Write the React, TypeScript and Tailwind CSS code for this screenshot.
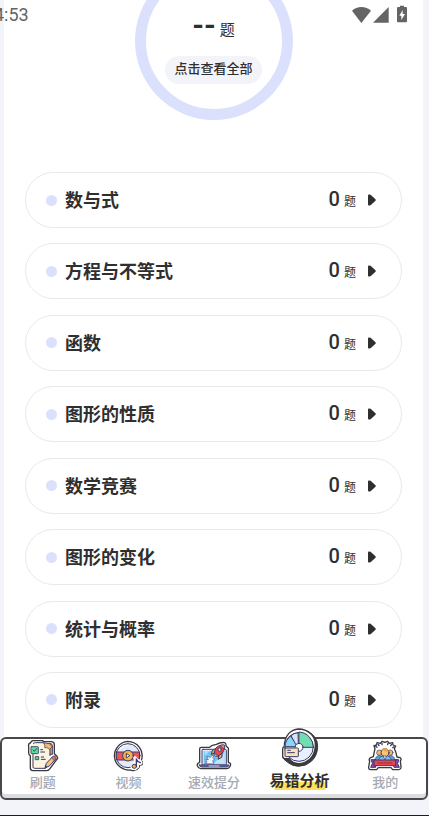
import type { ReactNode } from 'react'

interface Categoria {
  id: string
  nombre: string
  total: number
}

interface Tab {
  id: string
  label: string
  icon: ReactNode
}

const CATEGORIAS: Categoria[] = [
  { id: 'numeros', nombre: '数与式', total: 0 },
  { id: 'ecuaciones', nombre: '方程与不等式', total: 0 },
  { id: 'funciones', nombre: '函数', total: 0 },
  { id: 'figuras', nombre: '图形的性质', total: 0 },
  { id: 'concurso', nombre: '数学竞赛', total: 0 },
  { id: 'transformaciones', nombre: '图形的变化', total: 0 },
  { id: 'estadistica', nombre: '统计与概率', total: 0 },
  { id: 'apendice', nombre: '附录', total: 0 },
]

function PracticeIcon() {
  return (
    <svg viewBox="78 72 96 99" className="h-[33px] w-8 shrink-0" strokeLinejoin="round" strokeLinecap="round">
      <path
        d="M83 94 Q81 86 88 84 L91 80 Q92 77 98 77 L124 77 L129 80 L152 80 Q160 81 160 89 L160 116 L168 124 Q172 129 167 134 L145 163 Q142 167 136 167 L96 167 Q88 167 88 159 L88 122 Q83 120 83 113 Z"
        fill="#fff"
        stroke="#3a3a3c"
        strokeWidth="4"
      />
      <path d="M128 86 H150 Q154 87 154 92 V118 H128 Z" fill="#eda95a" stroke="#3b3a68" strokeWidth="3" />
      <path d="M98 84 H126 L146 102 V159 H97 Q94 159 94 155 V88 Q94 84 98 84 Z" fill="#fdf3df" />
      <path d="M96 118 V156 Q96 160 101 160 H133 M97 85 Q99 83 104 83 H128 L147 101 V122" fill="none" stroke="#3b3a68" strokeWidth="3" />
      <path d="M129 84 Q133 92 131 98 Q140 97 146 103 L153 96 Q151 87 145 86 Z" fill="#f3b765" stroke="#3b3a68" strokeWidth="2" />
      <rect x="90" y="95" width="22" height="21" rx="2" fill="#67d6aa" stroke="#3a5a6a" strokeWidth="3" />
      <path d="M96 105 L100 109 L107 101" fill="none" stroke="#2c4459" strokeWidth="3" />
      <path d="M119 104 H125 M119 111 H131 M121 126 H128 M121 133 H133" stroke="#3b3a68" strokeWidth="3" />
      <rect x="104" y="125" width="9" height="9" fill="#67d6aa" stroke="#3a5a6a" strokeWidth="3" />
      <path d="M132 158 L136 145 L156 124 L165 131 L146 152 Z" fill="#f5c384" stroke="#3b3a68" strokeWidth="3" />
      <path d="M153 127 L157 123 Q160 121 163 124 L165 127 Q166 130 163 133 L160 136 Z" fill="#e8636a" stroke="#3b3a68" strokeWidth="2" />
      <path d="M132 158 L134 151 L139 155 Z" fill="#3b3a68" />
    </svg>
  )
}

function VideoIcon() {
  return (
    <svg viewBox="81 72 96 99" className="h-[33px] w-8 shrink-0" strokeLinejoin="round" strokeLinecap="round">
      <path
        d="M128 79 A44 43 0 1 0 137 165 Q141 168 147 166 L156 163 Q163 160 164 151 L171 149 Q174 143 169 136 A44 43 0 0 0 128 79 Z"
        fill="#fff"
        stroke="#3a3a3c"
        strokeWidth="4"
      />
      <circle cx="129" cy="122" r="36" fill="#e3ebfa" stroke="#3b3a68" strokeWidth="3" />
      <path d="M104 103 Q112 91 127 91" fill="none" stroke="#fff" strokeWidth="3" />
      <path d="M95 111 H163 Q165 122 162 135 H96 Q92 122 95 111 Z" fill="#e8565c" stroke="#3b3a68" strokeWidth="3" />
      <circle cx="129" cy="122" r="16" fill="#f6b049" stroke="#3b3a68" strokeWidth="3" />
      <circle cx="129" cy="122" r="7" fill="#f9d9a0" />
      <path d="M125 116 L135 122 L125 128 Z" fill="#fff" stroke="#3b3a68" strokeWidth="3" />
      <path
        d="M147 127 L151 125 L158 133 L168 137 L171 144 L165 149 L160 147 L160 156 L152 163 L141 162 L138 154 L143 147 L149 146 Z"
        fill="#fff"
        stroke="#fff"
        strokeWidth="4"
      />
      <ellipse cx="148" cy="154" rx="7" ry="6" fill="#f6b049" stroke="#3b3a68" strokeWidth="3" />
      <path d="M154 153 V132 Q157 141 166 143" fill="none" stroke="#3b3a68" strokeWidth="4" />
    </svg>
  )
}

function RocketIcon() {
  return (
    <svg viewBox="77 72 108 99" className="h-[33px] w-9 shrink-0" strokeLinejoin="round" strokeLinecap="round">
      <path
        d="M88 101 Q88 97 93 97 L118 97 L124 92 L138 88 Q151 81 163 83 Q168 85 167 93 L173 98 Q175 101 174 106 L174 142 L180 145 Q182 150 178 156 Q175 161 169 161 L91 161 Q84 160 81 152 Q79 145 88 142 Z"
        fill="#fff"
        stroke="#3a3a3c"
        strokeWidth="4"
      />
      <rect x="95" y="103" width="73" height="47" rx="3" fill="#e3ebfa" stroke="#3b3a68" strokeWidth="3" />
      <path d="M100 108 H163 V146 H100 Z" fill="#6fc3f5" />
      <path d="M130 146 L163 112 V146 Z" fill="#c5e3f8" />
      <path d="M102 108 H118 L104 122 Z" fill="#b2ddfa" />
      <path
        d="M104 145 Q107 142 110 141 L106 133 L114 134 L109 124 L120 127 Q124 119 132 122 L127 128 L133 132 L127 137 L130 146 Z"
        fill="#f3f6fd"
        stroke="#55588a"
        strokeWidth="2"
      />
      <path d="M87 150 H176 Q175 156 169 156 H94 Q88 156 87 150 Z" fill="#6e79b8" stroke="#3b3a68" strokeWidth="3" />
      <path d="M116 153 H146" stroke="#cdd8f3" strokeWidth="3" />
      <path d="M137 100 L126 106 L123 119 L134 113 M155 115 L155 126 L144 133 L145 121" fill="#f3a94c" stroke="#3b3a68" strokeWidth="3" />
      <path d="M132 114 Q133 98 145 93 Q153 89 162 90 Q165 100 160 107 Q155 119 143 123 Z" fill="#e8464c" stroke="#3b3a68" strokeWidth="3" />
      <path d="M150 91 Q157 89 162 90 Q164 96 162 101 Z" fill="#f78a84" stroke="#3b3a68" strokeWidth="2" />
      <circle cx="148" cy="104" r="5" fill="#dcecfb" stroke="#3b3a68" strokeWidth="3" />
      <path d="M133 115 L142 123 L136 125 L132 121 Z" fill="#f6b049" stroke="#3b3a68" strokeWidth="2" />
    </svg>
  )
}

function AnalysisIcon() {
  return (
    <svg viewBox="75 27 120 123" className="h-[41px] w-10 shrink-0" strokeLinejoin="round" strokeLinecap="round">
      <path
        d="M136 36 Q160 36 176 53 Q189 68 188 86 Q187 113 170 129 Q153 145 130 145 Q112 144 101 135 L87 124 Q82 119 83 108 Z"
        fill="#3a3a3c"
        stroke="#3a3a3c"
        strokeWidth="3"
      />
      <path
        d="M130 33 Q154 33 169 49 Q182 63 181 83 Q180 108 164 124 Q149 137 130 137 Q113 136 103 122 L90 122 Q83 121 83 114 L83 93 Q83 87 88 85 Q88 62 101 47 Q113 34 130 33 Z"
        fill="#fff"
        stroke="#3a3a3c"
        strokeWidth="4"
      />
      <circle cx="132" cy="87" r="43" fill="#e9effc" stroke="#3b3a68" strokeWidth="3" />
      <path d="M132 87 L95 64 Q90 74 89 87 Z" fill="#7fd0f8" />
      <path d="M124 78 L107 54 Q91 66 90 86 H118 Z" fill="#8bd4fa" stroke="#3b3a68" strokeWidth="3" />
      <path d="M130 76 L129 44 Q117 45 108 53 L122 79" fill="#d9e3f8" stroke="#3b3a68" strokeWidth="3" />
      <path d="M133 42 Q151 43 163 57 Q175 70 175 88 L145 88 Q144 79 133 76 Z" fill="#73dcb0" stroke="#3b3a68" strokeWidth="3" />
      <circle cx="132" cy="88" r="12" fill="#fff" stroke="#3b3a68" strokeWidth="3" />
      <rect x="90" y="90" width="40" height="26" rx="2" fill="#fbe0b8" stroke="#3b3a68" strokeWidth="3" />
      <path d="M98 97 H106 M98 104 H118" stroke="#3b3a68" strokeWidth="3" />
    </svg>
  )
}

function ProfileIcon() {
  return (
    <svg viewBox="84 72 108 99" className="h-[33px] w-9 shrink-0" strokeLinejoin="round" strokeLinecap="round">
      <path
        d="M108 101 L105 92 L113 90 L114 83 L124 85 L129 79 L137 82 L146 79 L151 85 L161 83 L162 90 L170 93 L166 101 L170 110 L174 126 L183 128 Q189 132 184 138 L186 155 Q187 163 180 164 L161 164 L156 158 H118 L113 164 L94 164 Q88 163 89 156 L92 139 Q88 131 95 128 L103 125 L106 110 Z"
        fill="#fff"
        stroke="#3a3a3c"
        strokeWidth="4"
      />
      <path d="M114 97 L110 94 M120 92 L118 88 M129 89 L129 85 M146 89 L147 85 M155 92 L158 88 M161 98 L165 95" stroke="#3b3a68" strokeWidth="4" />
      <circle cx="121" cy="113" r="8" fill="#f3b765" stroke="#3b3a68" strokeWidth="2" />
      <circle cx="154" cy="113" r="8" fill="#f3b765" stroke="#3b3a68" strokeWidth="2" />
      <path d="M108 136 Q109 122 121 122 Q132 122 134 136 Z M141 136 Q143 122 154 122 Q167 122 168 136 Z" fill="#5aa2e0" stroke="#3b3a68" strokeWidth="2" />
      <path d="M119 136 Q121 122 138 122 Q155 122 157 136 Z" fill="#7cc0f4" stroke="#3b3a68" strokeWidth="2" />
      <circle cx="138" cy="113" r="12" fill="#fbc373" stroke="#3b3a68" strokeWidth="3" />
      <path d="M127 109 Q129 98 139 99 Q148 101 149 109 Q137 111 133 105 Z" fill="#eda04a" />
      <path d="M134 123 H142 L138 134 Z" fill="#fff" stroke="#3b3a68" strokeWidth="2" />
      <path d="M97 134 H110 V157 H95 L100 146 Z M166 134 H179 L176 146 L181 157 H166 Z" fill="#8f4bb0" stroke="#3b3a68" strokeWidth="3" />
      <path d="M106 135 H170 V152 H106 Z" fill="#e8464c" stroke="#3b3a68" strokeWidth="3" />
      <path d="M117 144 H159" stroke="#9c2d3f" strokeWidth="3" />
    </svg>
  )
}

const TABS: Tab[] = [
  { id: 'practica', label: '刷题', icon: <PracticeIcon /> },
  { id: 'video', label: '视频', icon: <VideoIcon /> },
  { id: 'mejora', label: '速效提分', icon: <RocketIcon /> },
  { id: 'analisis', label: '易错分析', icon: <AnalysisIcon /> },
  { id: 'perfil', label: '我的', icon: <ProfileIcon /> },
]

const TAB_ACTIVO = 'analisis'

function StatusBar() {
  return (
    <div className="absolute inset-x-0 top-0 z-10 flex h-7 items-center justify-between pr-[22px] text-[#646464]">
      <span className="-ml-1.5 pt-0.5 font-[Roboto] text-lg leading-5">4:53</span>
      <div className="flex items-center">
        {/* wifi, señal, batería */}
        <svg viewBox="0 0 57 51" className="h-[17px] w-[19px]" fill="currentColor">
          <path d="M0 14 Q12 3 28 3 Q45 3 57 14 L28 51 Z" />
        </svg>
        <svg viewBox="0 0 48 51" className="ml-0.5 h-[17px] w-4" fill="currentColor">
          <path d="M47 3 V50 H0 Z" />
        </svg>
        <svg viewBox="0 0 30 54" className="ml-2 h-[18px] w-2.5" fill="currentColor">
          <path
            fillRule="evenodd"
            d="M9 2 H21 V6 H27 Q30 6 30 9 V49 Q30 52 27 52 H3 Q0 52 0 49 V9 Q0 6 3 6 H9 Z M17 15 L7 32 H13 V45 L24 27 H17 Z"
          />
        </svg>
      </div>
    </div>
  )
}

function CategoriaRow({ categoria }: { categoria: Categoria }) {
  return (
    <li>
      <button
        type="button"
        className="flex h-14 w-full items-center rounded-full border border-[#e9e9e9] bg-white pr-[25px] pl-5 text-[#2f2f2f]"
      >
        <span className="mr-2 size-[11px] rounded-full bg-[#dbe0fd]" />
        <span className="pb-0.5 text-lg leading-7 font-bold">{categoria.nombre}</span>
        <span className="ml-auto flex items-baseline gap-1">
          <span className="font-[Roboto] text-xl leading-6 font-medium">{categoria.total}</span>
          <span className="text-xs leading-6">题</span>
        </span>
        <svg viewBox="0 0 8 12" className="ml-3 h-3 w-2" fill="#2f2f2f">
          <path d="M0 1.2 Q0 .3 1 .4 L2.6 .8 L7.5 5.2 Q8 6 7.5 6.8 L2.6 11.2 L1 11.6 Q0 11.7 0 10.8 Z" />
        </svg>
      </button>
    </li>
  )
}

function TabItem({ tab }: { tab: Tab }) {
  const activo = tab.id === TAB_ACTIVO
  return (
    <a href={`#${tab.id}`} className="flex flex-1 flex-col items-center justify-end">
      {tab.icon}
      {activo ? (
        <span className="relative text-[15px] leading-6 font-bold whitespace-nowrap text-[#2f2f2f]">
          <span className="absolute bottom-0.5 left-1/2 h-2 w-[51px] -translate-x-1/2 bg-[#ffdf5b]" />
          <span className="relative">{tab.label}</span>
        </span>
      ) : (
        <span className="text-[13px] leading-5 font-medium whitespace-nowrap text-[#a6a9b2]">{tab.label}</span>
      )}
    </a>
  )
}

export default function App() {
  return (
    <div className="relative flex min-h-screen flex-col overflow-hidden bg-[#f3f4fa] font-['Noto_Sans_CJK_SC','Noto_Sans',sans-serif]">
      <StatusBar />

      <main className="mr-1.5 ml-1 flex flex-1 flex-col bg-white px-[21px] pb-[9px]">
        {/* Total */}
        <section className="-mt-[38px] mb-[52px] flex size-[158px] flex-col items-center self-center rounded-full border-[11px] border-[#dbe0fd] pt-9">
          <p className="flex items-baseline gap-1 text-[#2f2f2f]">
            <span className="font-[Roboto] text-3xl leading-8 font-bold">--</span>
            <span className="text-[15px] leading-8">题</span>
          </p>
          <button
            type="button"
            className="mt-[11px] h-7 rounded-full bg-[#f3f4fa] px-[9px] pb-1 text-[13px] leading-5 font-medium whitespace-nowrap text-[#2f2f2f]"
          >
            点击查看全部
          </button>
        </section>

        {/* Lista de categorías */}
        <ul className="flex flex-1 flex-col justify-between gap-3">
          {CATEGORIAS.map((c) => (
            <CategoriaRow key={c.id} categoria={c} />
          ))}
        </ul>
      </main>

      <footer className="border-b border-[#1c1c1e] pb-[15px]">
        <nav className="mr-px h-[63px] rounded-md border-2 border-[#48484a] bg-white shadow-[inset_0_-4px_0_#dcdde0]">
          <div className="-mx-0.5 flex h-[59px] pb-1.5">
            {TABS.map((t) => (
              <TabItem key={t.id} tab={t} />
            ))}
          </div>
        </nav>
      </footer>
    </div>
  )
}
